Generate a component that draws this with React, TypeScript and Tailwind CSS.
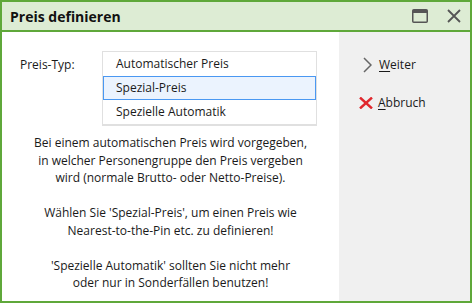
const font = { fontFamily: '"Open Sans", "Noto Sans", sans-serif' };

function MaxIcon() {
  return (
    <svg width="16" height="14" viewBox="0 0 16 14" className="block">
      <rect x="0.75" y="0.75" width="14.5" height="12.5" rx="1" fill="none" stroke="#555" strokeWidth="1.5" />
      <rect x="1" y="1" width="14" height="3" fill="#555" />
    </svg>
  );
}

function CloseIcon() {
  return (
    <svg width="14" height="14" viewBox="0 0 14 14" className="block">
      <path d="M1 1 L13 13 M13 1 L1 13" stroke="#555" strokeWidth="1.8" />
    </svg>
  );
}

function ChevronIcon() {
  return (
    <svg width="9" height="16" viewBox="0 0 9 16" className="block">
      <path d="M1 1 L8 8 L1 15" fill="none" stroke="#666" strokeWidth="1.5" />
    </svg>
  );
}

function RedX() {
  return (
    <svg width="14" height="12" viewBox="0 0 14 12" className="block">
      <path d="M1 0.5 L13 11.5 M13 0.5 L1 11.5" stroke="#e0282e" strokeWidth="2.4" />
    </svg>
  );
}

export default function App() {
  const options = ['Automatischer Preis', 'Spezial-Preis', 'Spezielle Automatik'];
  const selected = 1;

  return (
    <div
      className="flex h-[303px] w-[472px] flex-col border-2 border-[#5fa83a] text-[12px] text-[#1a1a1a]"
      style={font}
    >
      {/* Title bar */}
      <div className="flex h-[30px] shrink-0 items-center border-b-2 border-[#5fa83a] bg-[#ddecd4] pl-[8px] pr-[9px]">
        <span className="flex-1 text-[14px] font-bold text-[#111]">Preis definieren</span>
        <div className="flex items-center gap-[19px]">
          <MaxIcon />
          <CloseIcon />
        </div>
      </div>

      {/* Body */}
      <div className="flex flex-1">
        <div className="flex-1 bg-white">
          <div className="flex pl-[18px] pt-[19px]">
            <span className="w-[82px] pt-[5px]">Preis-Typ:</span>
            <div className="w-[215px] border border-b-2 border-[#e0e0e0]">
              {options.map((o, i) => (
                <div
                  key={o}
                  className={
                    i === selected
                      ? 'flex h-[24px] items-center border border-[#4a98f2] bg-[#ebf3fe] pl-[12px]'
                      : 'flex h-[24px] items-center border border-transparent pl-[12px]'
                  }
                >
                  {o}
                </div>
              ))}
            </div>
          </div>

          <div className="mt-[8px] text-center leading-[17.5px]">
            <p>Bei einem automatischen Preis wird vorgegeben,</p>
            <p>in welcher Personengruppe den Preis vergeben</p>
            <p>wird (normale Brutto- oder Netto-Preise).</p>
            <p>&nbsp;</p>
            <p>Wählen Sie 'Spezial-Preis', um einen Preis wie</p>
            <p>Nearest-to-the-Pin etc. zu definieren!</p>
            <p>&nbsp;</p>
            <p>'Spezielle Automatik' sollten Sie nicht mehr</p>
            <p>oder nur in Sonderfällen benutzen!</p>
          </div>
        </div>

        {/* Side panel */}
        <div className="w-[131px] bg-[#f0f0f0] pt-[24px]">
          <div className="flex h-[18px] items-center">
            <span className="ml-[24px] mr-[7px]">
              <ChevronIcon />
            </span>
            <span>
              <span className="underline underline-offset-2">W</span>eiter
            </span>
          </div>
          <div className="mt-[20px] flex h-[18px] items-center">
            <span className="ml-[20px] mr-[5px]">
              <RedX />
            </span>
            <span>
              <span className="underline underline-offset-2">A</span>bbruch
            </span>
          </div>
        </div>
      </div>
    </div>
  );
}
